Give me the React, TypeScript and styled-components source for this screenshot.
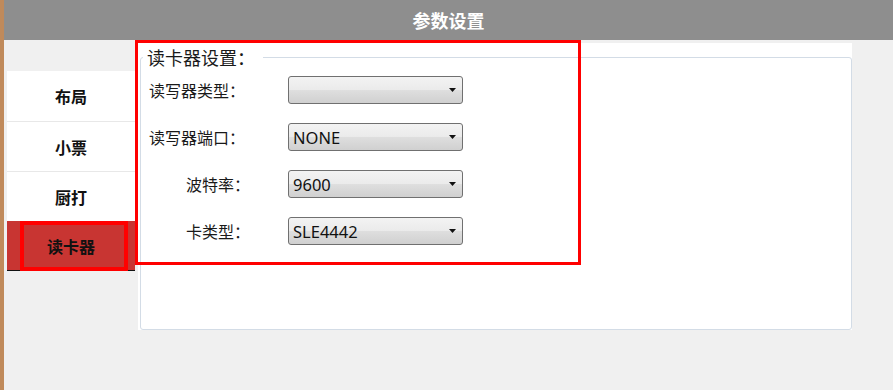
import React from "react";
import styled, { createGlobalStyle } from "styled-components";

const Global = createGlobalStyle`
  html, body { margin: 0; padding: 0; background: #f0f0f0; overflow: hidden; }
  body { font-family: "Noto Sans", "Noto Sans CJK SC", sans-serif; }
`;

const Screen = styled.div`
  position: relative;
  width: 893px;
  height: 390px;
  display: flex;
  background: #f0f0f0;
`;

const Edge = styled.div`
  width: 4px;
  flex: none;
  background: #c08a5b;
`;

const Main = styled.div`
  flex: 1;
  display: flex;
  flex-direction: column;
`;

const Header = styled.div`
  height: 40px;
  flex: none;
  background: #8e8e8e;
  color: #ffffff;
  display: flex;
  align-items: center;
  justify-content: center;
  font-family: "Noto Sans CJK SC", sans-serif;
  font-weight: 700;
  font-size: 18px;
`;

const Body = styled.div`
  display: flex;
  padding: 3px 0 0 3px;
  gap: 3px;
`;

const Sidebar = styled.div`
  width: 128px;
  margin-top: 28px;
  display: flex;
  flex-direction: column;
  border-bottom: 1px solid #111;
  align-self: flex-start;
`;

const NavItem = styled.div<{ $active?: boolean }>`
  height: 49px;
  display: flex;
  align-items: center;
  justify-content: center;
  background: ${(p) => (p.$active ? "#c83532" : "#ffffff")};
  border-top: ${(p) => (p.$active ? "none" : "1px solid #e8e8e8")};
  font-family: "Noto Sans CJK SC", sans-serif;
  font-weight: 700;
  font-size: 16px;
  color: #111;
  &:first-child { border-top: none; height: 50px; }
`;

const Panel = styled.div`
  width: 714px;
  height: 287px;
  background: #ffffff;
  padding: 13px 0 0 2px;
  box-sizing: border-box;
  display: flex;
`;

const Fieldset = styled.fieldset`
  flex: 1;
  margin: 0;
  padding: 8px 0 0 6px;
  border: 1px solid #d3dce6;
  border-radius: 3px;
  min-width: 0;
  display: flex;
  flex-direction: column;
  gap: 19px;
  position: relative;
  top: -10px;
  height: 284px;
  box-sizing: border-box;
`;

const Legend = styled.legend`
  padding: 0 8px 0 4px;
  margin-left: -4px;
  font-family: "Noto Sans CJK SC", sans-serif;
  font-size: 18px;
  color: #1a1a1a;
  line-height: 22px;
`;

const Row = styled.div`
  display: flex;
  align-items: center;
  height: 28px;
`;

const Label = styled.div<{ $indent: number }>`
  width: 141px;
  box-sizing: border-box;
  padding-left: ${(p) => p.$indent}px;
  font-family: "Noto Sans CJK SC", sans-serif;
  font-size: 16px;
  color: #1a1a1a;
  white-space: nowrap;
`;

const Select = styled.div`
  width: 175px;
  height: 28px;
  box-sizing: border-box;
  border: 1px solid #707070;
  border-radius: 3px;
  background: linear-gradient(#f3f3f3 0%, #ebebeb 48%, #dedede 52%, #d0d0d0 100%);
  display: flex;
  align-items: center;
  justify-content: space-between;
  padding: 0 6px 0 4px;
  font-family: "Noto Sans", sans-serif;
  font-size: 16.5px;
  color: #111;
`;

const Arrow = () => (
  <svg width="7" height="4" viewBox="0 0 7 4">
    <path d="M0 0 H7 L3.5 4 Z" fill="#111" />
  </svg>
);

const Mark = styled.div<{ $x: number; $y: number; $w: number; $h: number; $b: number }>`
  position: absolute;
  left: ${(p) => p.$x}px;
  top: ${(p) => p.$y}px;
  width: ${(p) => p.$w}px;
  height: ${(p) => p.$h}px;
  border: ${(p) => p.$b}px solid #ff0000;
  box-sizing: border-box;
  pointer-events: none;
`;

const rows = [
  { label: "读写器类型：", indent: 2, value: "" },
  { label: "读写器端口：", indent: 2, value: "NONE" },
  { label: "波特率：", indent: 39, value: "9600" },
  { label: "卡类型：", indent: 39, value: "SLE4442" },
];

export default function App() {
  return (
    <>
      <Global />
      <Screen>
        <Edge />
        <Main>
          <Header>参数设置</Header>
          <Body>
            <Sidebar>
              <NavItem>布局</NavItem>
              <NavItem>小票</NavItem>
              <NavItem>厨打</NavItem>
              <NavItem $active>读卡器</NavItem>
            </Sidebar>
            <Panel>
              <Fieldset>
                <Legend>读卡器设置：</Legend>
                {rows.map((r) => (
                  <Row key={r.label}>
                    <Label $indent={r.indent}>{r.label}</Label>
                    <Select>
                      <span>{r.value}</span>
                      <Arrow />
                    </Select>
                  </Row>
                ))}
              </Fieldset>
            </Panel>
          </Body>
        </Main>
        <Mark $x={135} $y={40} $w={446} $h={225} $b={3} />
        <Mark $x={20} $y={221} $w={108} $h={50} $b={4} />
      </Screen>
    </>
  );
}
